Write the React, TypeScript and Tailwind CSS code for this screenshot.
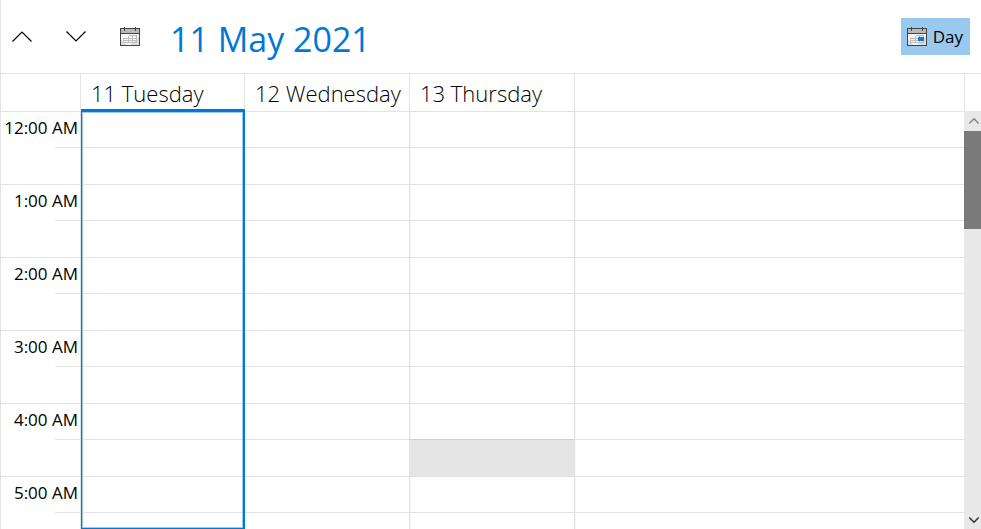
import React from "react";

const days = [
  { label: "11 Tuesday", col: "w-[164px]" },
  { label: "12 Wednesday", col: "w-[165px]" },
  { label: "13 Thursday", col: "w-[165px]" },
];

const hours = ["12:00 AM", "1:00 AM", "2:00 AM", "3:00 AM", "4:00 AM", "5:00 AM"];

// half-hour slot currently under the pointer
const activeSlot = { day: 2, hour: 4, half: 1 };

function Chevron({ down, className }: { down?: boolean; className: string }) {
  return (
    <svg viewBox="0 0 20 11" className={className} fill="none" stroke="currentColor" strokeWidth="1.2" aria-hidden="true">
      <path d={down ? "M.5 .5 10 10 19.5 .5" : "M.5 10.5 10 1 19.5 10.5"} />
    </svg>
  );
}

function CalendarIcon({ marked }: { marked?: boolean }) {
  return (
    <svg width="20" height="19" viewBox="0 0 20 19" shapeRendering="crispEdges" aria-hidden="true">
      <rect x="0" y="1" width="20" height="18" fill="#444" />
      <rect x="1" y="2" width="18" height="4" fill="#b9b9b9" />
      <rect x="1" y="7" width="18" height="11" fill="#f8f8f8" />
      <path d="M1 18V13L6 18ZM10 18L19 10V18Z" fill="#dcdcdc" />
      <path d="M4 0h1v4h-1zM15 0h1v4h-1z" fill="#444" />
      <path d="M8.500 8.500h8v7h-13v-4h13M3.500 13.500h13M8.500 8.500v7M12.500 8.500v7" fill="none" stroke="#bdbdbd" />
      {marked && <rect x="11" y="10" width="6" height="4" fill="#1677cf" />}
    </svg>
  );
}

function Toolbar() {
  return (
    <header className="flex items-center h-[74px] shrink-0 border-b border-[#e3e3e3] pl-[11px] pr-[11px]">
      <button type="button" aria-label="Previous" className="w-5 mr-[34px]">
        <Chevron className="w-5 h-[11px]" />
      </button>
      <button type="button" aria-label="Next" className="w-5 mr-[34px]">
        <Chevron down className="w-5 h-[11px]" />
      </button>
      <button type="button" aria-label="Pick a date" className="w-5 mr-[30px]">
        <CalendarIcon />
      </button>
      <h1 className="pt-1 text-[34px] leading-10 text-[#0078d7]">11 May 2021</h1>
      <button type="button" className="flex items-center gap-[6px] ml-auto h-[37px] pl-[6px] pr-[7px] bg-[#99c9ef] text-[17px]">
        <CalendarIcon marked />
        Day
      </button>
    </header>
  );
}

function ScrollBar() {
  return (
    <div className="flex flex-col w-[17px] shrink-0">
      <div className="h-[37px] shrink-0 border-l border-[#e3e3e3]" />
      <div className="flex flex-col flex-1 bg-[#e8e8e8]">
        <button type="button" aria-label="Scroll up" className="flex items-center justify-center h-5 pl-[3px] text-[#888]">
          <Chevron className="w-[10px] h-[6px] stroke-3" />
        </button>
        <div className="h-[98px] bg-[#7a7a7a]" />
        <button type="button" aria-label="Scroll down" className="flex items-center justify-center h-[19px] pl-[3px] mt-auto text-[#333]">
          <Chevron down className="w-[10px] h-[6px] stroke-3" />
        </button>
      </div>
    </div>
  );
}

const line = "border-b border-[#e3e3e3]";
const dayCell = "border-l border-b border-[#e3e3e3]";

export default function App() {
  return (
    <div className="flex flex-col h-screen overflow-hidden bg-white text-black border-l border-[#e3e3e3] font-['Open_Sans','Noto_Sans',sans-serif]">
      <Toolbar />
      <main className="flex flex-1 min-h-0">
        <div className="relative flex-1 min-w-0 overflow-hidden">
          <table className="w-full table-fixed border-separate border-spacing-0">
            <colgroup>
              <col className="w-[79px]" />
              {days.map((day) => (
                <col key={day.label} className={day.col} />
              ))}
              <col />
            </colgroup>
            <thead>
              <tr className="h-[38px]">
                <td className={line} />
                {days.map((day) => (
                  <th key={day.label} scope="col" className={`${dayCell} p-0 pl-[10px] text-left text-[22px] leading-8 font-light whitespace-nowrap`}>
                    {day.label}
                  </th>
                ))}
                <td className={dayCell} />
              </tr>
            </thead>
            <tbody>
              {hours.map((hour, h) =>
                [0, 1].map((half) => (
                  <tr key={`${hour}-${half}`} className={half ? "h-[37px]" : "h-9"}>
                    {half === 0 && (
                      <th scope="row" rowSpan={2} className={`${line} p-0 align-top text-right text-[17px] font-normal`}>
                        <div className="h-[35px] pr-[2px] leading-8 whitespace-nowrap">{hour}</div>
                        <div className="ml-auto w-[25px] h-px bg-[#e3e3e3]" />
                      </th>
                    )}
                    {days.map((day, d) => {
                      const active = d === activeSlot.day && h === activeSlot.hour && half === activeSlot.half;
                      return (
                        <td
                          key={day.label}
                          className={active ? `${dayCell} bg-[#e5e5e5] shadow-[0_-1px_#cfcfcf]` : `${dayCell} shadow-[inset_1px_0_#f6f6f6]`}
                        />
                      );
                    })}
                    <td className={`${dayCell} shadow-[inset_1px_0_#f6f6f6]`} />
                  </tr>
                ))
              )}
            </tbody>
          </table>
          {/* outline around the selected day */}
          <div className="absolute left-20 top-[35px] bottom-0 w-[164px] border-[#0078d7] border-t-[3px] border-l border-r-2 border-b shadow-[inset_0_0_0_1px_#99c9ef] pointer-events-none" />
        </div>
        <ScrollBar />
      </main>
    </div>
  );
}
